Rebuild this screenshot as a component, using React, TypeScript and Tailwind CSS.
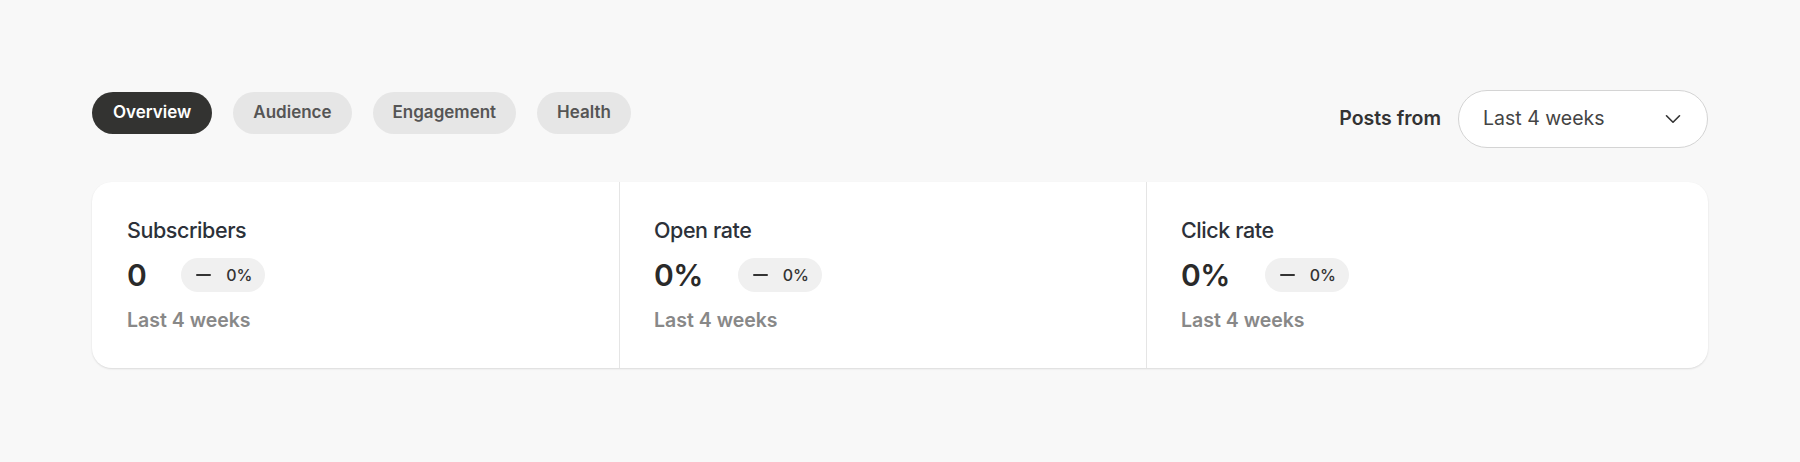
import clsx from "clsx";
import { ChevronDown } from "lucide-react";

const tabs = ["Overview", "Audience", "Engagement", "Health"];

const stats = [
  { label: "Subscribers", value: "0", change: "0%" },
  { label: "Open rate", value: "0%", change: "0%" },
  { label: "Click rate", value: "0%", change: "0%" },
];

function StatCell({
  label,
  value,
  change,
  first,
}: {
  label: string;
  value: string;
  change: string;
  first?: boolean;
}) {
  return (
    <div
      className={clsx(
        "flex flex-col gap-[13px] py-[34px] pr-[35px]",
        first ? "pl-[35px]" : "border-l border-[#e5e5e5] pl-[34px]",
      )}
    >
      <h3 className="h-[28px] text-[21.5px] leading-[28px] font-medium tracking-[-0.02em] text-[#2c3139]">
        {label}
      </h3>
      <div className="flex h-[36px] items-center gap-[35px]">
        <span className="text-[30px] leading-[36px] font-semibold tracking-[-0.02em] text-[#2a2a2a]">
          {value}
        </span>
        {/* change badge */}
        <span className="flex h-[34px] items-center gap-[15px] rounded-full bg-[#f0f0f0] pr-[13px] pl-[15px] text-[16px] font-medium text-[#333]">
          <svg width="15" height="2" viewBox="0 0 15 2">
            <rect width="15" height="2" rx="1" fill="#333" />
          </svg>
          {change}
        </span>
      </div>
      <p className="h-[28px] text-[19.5px] leading-[28px] font-semibold text-[#888]">
        Last 4 weeks
      </p>
    </div>
  );
}

export default function App() {
  return (
    <div className="min-h-[462px] w-full bg-[#f8f8f8] px-[92px] pt-[90px] font-['Inter',sans-serif]">
      <div className="flex items-start justify-between">
        <div className="flex gap-[21px] pt-[2px]">
          {tabs.map((t, i) => (
            <button
              key={t}
              className={clsx(
                "h-[42px] rounded-full text-[17px] font-semibold",
                i === 0
                  ? "bg-[#333331] px-[21px] text-white"
                  : "bg-[#e6e6e6] px-5 text-[#555]",
              )}
            >
              {t}
            </button>
          ))}
        </div>
        <div className="flex items-center gap-[17px]">
          <span className="text-[19.5px] font-semibold text-[#333]">
            Posts from
          </span>
          <button className="flex h-[58px] w-[250px] items-center justify-between rounded-full border border-[#d4d4d4] bg-white pr-[21px] pl-6 text-[19.5px] text-[#444]">
            Last 4 weeks
            <ChevronDown size={26} strokeWidth={1.5} className="text-[#333]" />
          </button>
        </div>
      </div>

      <div className="mt-[34px] grid grid-cols-[527px_527px_1fr] rounded-[20px] bg-white shadow-[0_1px_2px_rgba(0,0,0,0.12)]">
        {stats.map((s, i) => (
          <StatCell key={s.label} {...s} first={i === 0} />
        ))}
      </div>
    </div>
  );
}
